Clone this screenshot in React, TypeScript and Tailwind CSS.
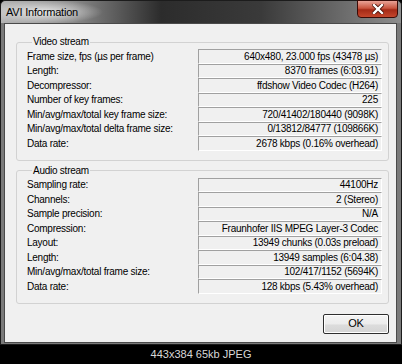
const video: [string, string][] = [
  ["Frame size, fps (µs per frame)", "640x480, 23.000 fps (43478 µs)"],
  ["Length:", "8370 frames (6:03.91)"],
  ["Decompressor:", "ffdshow Video Codec (H264)"],
  ["Number of key frames:", "225"],
  ["Min/avg/max/total key frame size:", "720/41402/180440 (9098K)"],
  ["Min/avg/max/total delta frame size:", "0/13812/84777 (109866K)"],
  ["Data rate:", "2678 kbps (0.16% overhead)"],
];

const audio: [string, string][] = [
  ["Sampling rate:", "44100Hz"],
  ["Channels:", "2 (Stereo)"],
  ["Sample precision:", "N/A"],
  ["Compression:", "Fraunhofer IIS MPEG Layer-3 Codec"],
  ["Layout:", "13949 chunks (0.03s preload)"],
  ["Length:", "13949 samples (6:04.38)"],
  ["Min/avg/max/total frame size:", "102/417/1152 (5694K)"],
  ["Data rate:", "128 kbps (5.43% overhead)"],
];

function Group({ title, rows }: { title: string; rows: [string, string][] }) {
  return (
    <fieldset className="border border-[#d2d2d2] rounded-[3px] pl-[10px] pr-[6px] pb-[9px]">
      <legend className="ml-[5px] px-[1px] leading-[14px] text-[10px] tracking-[-0.25px] text-black">
        {title}
      </legend>
      <div className="grid grid-cols-[171px_1fr]">
        {rows.map(([label, value], i) => (
          <div key={i} className="contents">
            <div className="h-[14.5px] flex items-center text-black">{label}</div>
            <div className="h-[14.5px] flex items-center justify-end pr-[3px] border border-t-[#a0a0a0] border-l-[#a0a0a0] border-b-white border-r-white bg-[#f0f0f0] text-black">
              {value}
            </div>
          </div>
        ))}
      </div>
    </fieldset>
  );
}

export default function App() {
  return (
    <div className="w-[402px] h-[364px] bg-black flex flex-col font-['Liberation_Sans',Arial,sans-serif] text-[10px] tracking-[-0.25px]">
      {/* Window */}
      <div className="h-[345px] flex flex-col bg-[#7a7a7a] border border-[#1c1c1c] rounded-t-[5px]">
        {/* Title bar */}
        <div className="h-[22px] flex justify-between bg-[image:radial-gradient(ellipse_60px_12px_at_42px_11px,rgba(235,235,235,0.95),rgba(235,235,235,0)),linear-gradient(90deg,#b4b4b4_0%,#8a8a8a_18%,#2c2c2c_40%,#3a3a3a_65%,#8e8e8e_100%)] rounded-t-[5px]">
          <span className="pl-[5px] pt-[3px] text-[11px] tracking-[-0.2px] text-black">AVI Information</span>
          <div className="-mt-px mr-[3px] w-[41px] h-[18px] flex items-center justify-center rounded-b-[4px] border border-[#3a0c08] bg-[linear-gradient(180deg,#e9a397_0%,#c9553f_45%,#a52a16_55%,#c4462c_100%)]">
            <svg width="12" height="10" viewBox="0 0 12 10">
              <path d="M2 1 L10 9 M10 1 L2 9" stroke="#4a1008" strokeWidth="4" strokeLinecap="square" />
              <path d="M2 1 L10 9 M10 1 L2 9" stroke="#ffffff" strokeWidth="2.4" strokeLinecap="square" />
            </svg>
          </div>
        </div>

        {/* Client area */}
        <div className="flex-1 ml-[3px] mr-[4px] mb-px bg-[#f0f0f0] border border-[#4a4a4a] pl-[11px] pr-[7px] pt-[11px] flex flex-col">
          <Group title="Video stream" rows={video} />
          <div className="h-[3px]" />
          <Group title="Audio stream" rows={audio} />
          <div className="flex justify-end mt-[10px]">
            <button className="w-[66px] h-[20px] border border-[#2e2e2e] rounded-[2px] bg-[linear-gradient(180deg,#f4f4f4_0%,#ececec_50%,#dcdcdc_55%,#d4d4d4_100%)] text-[11px] text-black shadow-[inset_0_0_0_1px_#ffffff]">
              OK
            </button>
          </div>
        </div>
      </div>

      {/* Caption */}
      <div className="flex-1 flex items-center justify-center text-[11px] tracking-normal text-[#d8d8d8]">
        443x384 65kb JPEG
      </div>
    </div>
  );
}
